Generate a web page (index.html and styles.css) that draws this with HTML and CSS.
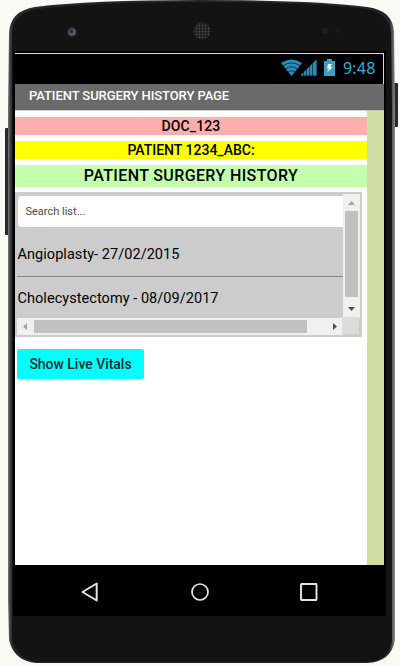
FILE: index.html
```html
<!DOCTYPE html>
<html lang="en">
<head>
<meta charset="utf-8">
<title>Patient Surgery History</title>
<link rel="stylesheet" href="styles.css">
</head>
<body>
<div class="device">
  <svg class="shell" width="400" height="666" viewBox="0 0 400 666" aria-hidden="true">
    <defs>
      <linearGradient id="rim" x1="0" x2="1" y1="0" y2="0">
        <stop offset="0" stop-color="#77797a"/><stop offset=".006" stop-color="#3c3d3e"/><stop offset=".012" stop-color="#252627"/>
        <stop offset=".985" stop-color="#252527"/><stop offset=".993" stop-color="#555557"/><stop offset="1" stop-color="#8b8b8c"/>
      </linearGradient>
      <pattern id="mesh" width="3" height="3" patternUnits="userSpaceOnUse"><rect width="3" height="3" fill="#1c1c1c"/><circle cx="1.5" cy="1.5" r=".9" fill="#4c4c4c"/></pattern>
    </defs>
    <rect x="5" y="128" width="5" height="107" rx="1" fill="#28292a"/>
    <rect x="393" y="83" width="5" height="44" rx="1" fill="#29292b"/>
    <path d="M9 33Q10 11 35 7Q90 0 200 0Q315 0 367 7Q392 10 394 31L395 110V640Q391 662 367 663H36Q14 661 9 640L8 600V110Z" fill="url(#rim)"/>
    <path d="M12 34Q13 13 38 9Q95 2 200 2Q315 2 366 9Q389 13 391 33L392 110V640Q389 661 366 662H38Q17 660 12 639Z" fill="#131313"/>
    <circle cx="72" cy="32" r="5" fill="#303030"/><circle cx="72" cy="32" r="3.2" fill="#686a70"/><circle cx="71.5" cy="31.5" r="2" fill="#252365"/>
    <circle cx="202" cy="31" r="8.5" fill="url(#mesh)"/>
    <circle cx="325" cy="30.500" r="3.500" fill="#1d1d1d"/><circle cx="338" cy="30.500" r="2.500" fill="#1b1b1b"/>
  </svg>
  <div class="screen">
    <div class="status">
      <svg width="56" height="18" viewBox="0 0 56 18" aria-hidden="true">
        <path d="M0 4Q10.500-3 21 4L10.500 17Z" fill="#278eb9"/>
        <path d="M2 6.800Q10.500 1 19 6.800M4.500 10Q10.500 5.500 16.500 10M7 13Q10.500 10.300 14 13" fill="none" stroke="#06202b" stroke-width=".8"/>
        <path d="M19.500 16.500L35.500 .5V16.500Z" fill="#12455a"/>
        <path d="M20 16.500V15.500L22 14V16.500ZM23 16.500V13L25 11V16.500ZM26 16.500V10L28 8V16.500ZM29 16.500V7L31 5V16.500ZM32 16.500V4L35.500 .5V16.500Z" fill="#278eb9"/>
        <path d="M43 2H46V0H51V2H54V17H43Z" fill="#3c9dc3"/>
        <path d="M47 5H51L49.500 8H52L46 13.500L48 9.500H46Z" fill="#e7f3f8"/>
      </svg>
      <span class="clock">9:48</span>
    </div>
    <header class="title"><span>PATIENT SURGERY HISTORY PAGE</span></header>
    <div class="page">
      <main class="content">
        <div class="band doctor">DOC_123</div>
        <div class="band patient">PATIENT 1234_ABC:</div>
        <h1 class="band heading">PATIENT SURGERY HISTORY</h1>
        <section class="history">
          <div class="list">
            <div class="search">Search list...</div>
            <div class="entry first">Angioplasty- 27/02/2015</div>
            <div class="entry second">Cholecystectomy - 08/09/2017</div>
          </div>
          <div class="vbar">
            <svg width="17" height="17"><path d="M5 11L8.500 7L12 11Z" fill="#a3a3a3"/></svg>
            <div class="vthumb"></div>
            <svg width="17" height="21"><path d="M5 10H12L8.500 14Z" fill="#505050"/></svg>
          </div>
          <div class="hbar">
            <svg width="17" height="17"><path d="M10 5V12L6 8.500Z" fill="#a3a3a3"/></svg>
            <div class="hthumb"></div>
            <svg class="next" width="17" height="17"><path d="M7 5V12L11 8.500Z" fill="#505050"/></svg>
          </div>
          <div class="corner"></div>
        </section>
        <button class="vitals">Show Live Vitals</button>
      </main>
      <aside class="side"></aside>
    </div>
    <nav class="nav">
      <svg width="22" height="22"><path d="M17.700 2.500V19.500L3.500 11Z" fill="none" stroke="#e4e4e4" stroke-width="2" stroke-linejoin="round"/></svg>
      <svg width="22" height="22"><circle cx="11" cy="11" r="8" fill="none" stroke="#e4e4e4" stroke-width="1.700"/></svg>
      <svg width="22" height="22"><rect x="3" y="3" width="15.500" height="16" rx=".5" fill="none" stroke="#e4e4e4" stroke-width="1.900"/></svg>
    </nav>
  </div>
</div>
</body>
</html>
```

FILE: styles.css
```css
* { box-sizing: border-box; }
body { margin: 0; background: #f9faf4; font-family: Roboto, "Liberation Sans", sans-serif; color: #000; }
svg { display: block; flex: none; }
.device { position: relative; width: 400px; height: 666px; padding: 51px 14px 0 13px; overflow: hidden; }
.shell { position: absolute; left: 0; top: 0; }
.screen { position: relative; height: 565px; background: #000; padding: 2px 2px 0; }
.status { height: 31px; border-top: 1px solid #dcdfaa; border-right: 1px solid #dcdfaa; display: flex; justify-content: flex-end; align-items: center; padding: 0 7px 2px 0; }
.clock { width: 33px; margin-left: 6px; font: 16px/20px "Noto Sans", sans-serif; letter-spacing: .2px; color: #36acd8; white-space: nowrap; }
.title { height: 26px; padding-left: 14px; background: #6a6a6a; color: #fff; font-size: 13px; font-weight: 500; letter-spacing: -.08px; line-height: 24px; white-space: nowrap; border-bottom: 1px solid #666; }
.page { display: flex; height: 455px; }
.content { width: 352px; background: #fff; border-top: 1px solid #ccc; padding-top: 6px; }
.side { flex: 1; background: #d1dfa5; border-top: 1px solid #c5c8b3; }
.band { height: 18px; margin: 0 0 6px; text-align: center; font-size: 14px; font-weight: 500; line-height: 18px; white-space: nowrap; }
.doctor { background: #ffadad; letter-spacing: .1px; }
.patient { background: #ff0; }
.heading { height: 22px; margin-bottom: 5px; background: #c3ffad; font-size: 16px; line-height: 22px; letter-spacing: .38px; }
.history { width: 347px; height: 145px; border: 2px solid #ccc; display: grid; grid-template-columns: 326px 17px; grid-template-rows: 124px 17px; background: #ccc; }
.list { overflow: hidden; }
.search { height: 31px; margin: 2px 0 0 1px; padding-left: 7.5px; background: #fff; border-radius: 4px 0 0 4px; font-size: 11px; line-height: 31px; color: #4c4c4c; }
.entry { font-size: 14.5px; white-space: nowrap; letter-spacing: .05px; padding-left: .5px; }
.first { height: 50px; padding-top: 3px; line-height: 49px; border-bottom: 1px solid #888; }
.second { line-height: 44px; }
.vbar, .hbar { display: flex; background: #f0f0f0; }
.vbar { flex-direction: column; }
.vthumb { width: 13px; height: 86px; margin-left: 2px; background: #c1c1c1; }
.hthumb { width: 273px; height: 13px; margin-top: 2px; background: #c1c1c1; }
.next { margin-left: auto; }
.corner { margin: -1px 1px 1px -1px; background: #dcdcdc; }
.vitals { display: block; width: 127px; height: 30px; margin: 12px 0 0 2px; padding: 0; border: 0; border-radius: 2px; background: #0ff; color: #06302f; font: 500 14px/30px Roboto, sans-serif; letter-spacing: -.03px; white-space: nowrap; }
.nav { height: 50px; display: flex; justify-content: space-between; padding: 16px 64px 0; }
```
